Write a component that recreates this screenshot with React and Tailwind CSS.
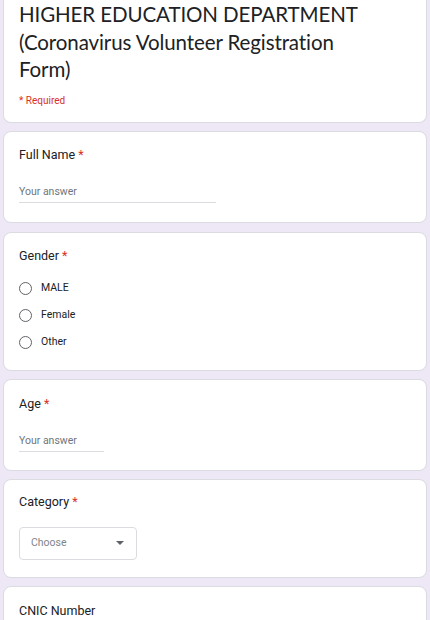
function Card({ children, className = '' }) {
  return (
    <div className={`mx-[3px] rounded-lg border border-[#dadce0] bg-white px-[15px] ${className}`}>
      {children}
    </div>
  )
}

function Label({ text, required = true }) {
  return (
    <div className="text-[12.5px] leading-5 text-[#202124]">
      {text}
      {required && <span className="text-[#d93025]"> *</span>}
    </div>
  )
}

function TextAnswer({ width }) {
  return (
    <div className={`border-b border-[#dadce0] pb-[3px] text-[10.5px] text-[#70757a] ${width}`}>Your answer</div>
  )
}

function Radio({ label }) {
  return (
    <div className="flex h-[27px] items-center gap-[9px]">
      <span className="box-border h-[13px] w-[13px] rounded-full border-[1.5px] border-[#5f6368]" />
      <span className="text-[10.5px] text-[#202124]">{label}</span>
    </div>
  )
}

export default function App() {
  return (
    <div className="h-[620px] overflow-hidden bg-[#ede7f6] font-['Roboto',sans-serif]">
      <div className="mx-[3px] rounded-b-lg border border-t-0 border-[#dadce0] bg-white px-[15px] pb-[14px]">
        <h1 className="max-w-[365px] pt-[1px] font-['Lato',sans-serif] text-[20.5px] leading-[27.5px] tracking-[-0.1px] text-[#202124]">
          HIGHER EDUCATION DEPARTMENT (Coronavirus Volunteer Registration Form)
        </h1>
        <div className="mt-[9px] text-[10px] text-[#d93025]">* Required</div>
      </div>

      <Card className="mt-[8px] h-[92px] pt-[13px]">
        <Label text="Full Name" />
        <div className="mt-[19px]">
          <TextAnswer width="w-[197px]" />
        </div>
      </Card>

      <Card className="mt-[9px] h-[139px] pt-[13px]">
        <Label text="Gender" />
        <div className="mt-[9px]">
          <Radio label="MALE" />
          <Radio label="Female" />
          <Radio label="Other" />
        </div>
      </Card>

      <Card className="mt-[8px] h-[92px] pt-[14px]">
        <Label text="Age" />
        <div className="mt-[19px]">
          <TextAnswer width="w-[85px]" />
        </div>
      </Card>

      <Card className="mt-[8px] h-[99px] pt-[12px]">
        <Label text="Category" />
        <div className="mt-[15px] flex h-[33px] w-[118px] items-center justify-between rounded border border-[#dadce0] pl-[11px] pr-[12px]">
          <span className="text-[10.5px] text-[#80868b]">Choose</span>
          <svg width="8" height="4" viewBox="0 0 8 4">
            <path d="M0 0 L8 0 L4 4 Z" fill="#5f6368" />
          </svg>
        </div>
      </Card>

      <Card className="mt-[8px] h-[120px] pt-[14px]">
        <Label text="CNIC Number" required={false} />
      </Card>
    </div>
  )
}
